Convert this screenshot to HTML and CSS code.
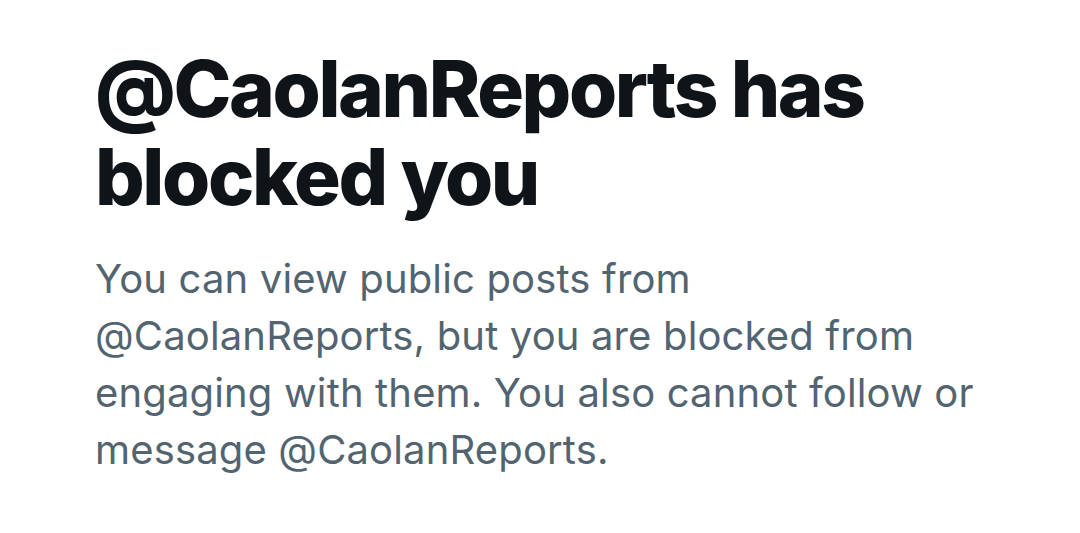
FILE: index.html
```html
<!DOCTYPE html>
<html>
<head>
<meta charset="utf-8">
<link rel="stylesheet" href="styles.css">
</head>
<body>
<main class="notice">
  <h1 class="title">@CaolanReports has blocked you</h1>
  <p class="desc">You can view public posts from @CaolanReports, but you are blocked from engaging with them. You also cannot follow or message @CaolanReports.</p>
</main>
</body>
</html>
```
FILE: styles.css
```css
html, body {
  margin: 0;
  padding: 0;
  background: #ffffff;
}
.notice {
  padding: 45px 0 0 95px;
  width: 900px;
  font-family: Inter, "Noto Sans", sans-serif;
}
.title {
  margin: 0;
  font-size: 78px;
  line-height: 88px;
  font-weight: 800;
  color: #0f1419;
  letter-spacing: -2.4px;
}
.desc {
  margin: 29px 0 0;
  font-size: 40px;
  line-height: 57px;
  font-weight: 400;
  color: #536471;
  letter-spacing: 0.15px;
}
```
